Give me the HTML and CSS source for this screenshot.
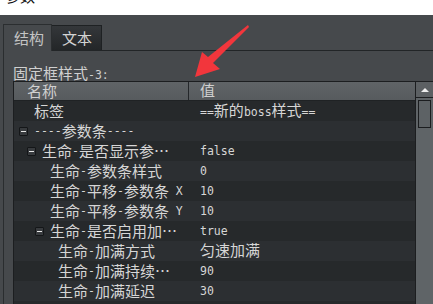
FILE: index.html
```html
<!DOCTYPE html>
<html lang="zh-CN">
<head>
    <meta charset="UTF-8">
    <title>属性</title>
    <link rel="stylesheet" href="styles.css">
</head>
<body>
    <div class="title"><span class="zh">参数</span></div>

    <div class="tabs">
        <div class="tab active"><span class="zh">结构</span></div>
        <div class="tab"><span class="zh">文本</span></div>
    </div>

    <div class="pane">
        <div class="caption"><span class="zh">固定框样式</span>-3:</div>
        <div class="view">
            <div class="list">
                <div class="head">
                    <div class="name"><span class="zh">名称</span></div>
                    <div class="value"><span class="zh">值</span></div>
                </div>
                <div class="row">
                    <div class="name l0"><i class="box leaf"></i><span class="zh">标签</span></div>
                    <div class="value">==<span class="zh">新的</span>boss<span class="zh">样式</span>==</div>
                </div>
                <div class="row">
                    <div class="name l0"><i class="box"></i>----<span class="zh">参数条</span>----</div>
                    <div class="value"></div>
                </div>
                <div class="row">
                    <div class="name l1"><i class="box"></i><span class="zh">生命</span>-<span class="zh">是否显示参…</span></div>
                    <div class="value">false</div>
                </div>
                <div class="row">
                    <div class="name l2"><i class="box leaf"></i><span class="zh">生命</span>-<span class="zh">参数条样式</span></div>
                    <div class="value">0</div>
                </div>
                <div class="row">
                    <div class="name l2"><i class="box leaf"></i><span class="zh">生命</span>-<span class="zh">平移</span>-<span class="zh">参数条</span>&nbsp;X</div>
                    <div class="value">10</div>
                </div>
                <div class="row">
                    <div class="name l2"><i class="box leaf"></i><span class="zh">生命</span>-<span class="zh">平移</span>-<span class="zh">参数条</span>&nbsp;Y</div>
                    <div class="value">10</div>
                </div>
                <div class="row">
                    <div class="name l2"><i class="box"></i><span class="zh">生命</span>-<span class="zh">是否启用加…</span></div>
                    <div class="value">true</div>
                </div>
                <div class="row">
                    <div class="name l3"><i class="box leaf"></i><span class="zh">生命</span>-<span class="zh">加满方式</span></div>
                    <div class="value"><span class="zh">匀速加满</span></div>
                </div>
                <div class="row">
                    <div class="name l3"><i class="box leaf"></i><span class="zh">生命</span>-<span class="zh">加满持续…</span></div>
                    <div class="value">90</div>
                </div>
                <div class="row">
                    <div class="name l3"><i class="box leaf"></i><span class="zh">生命</span>-<span class="zh">加满延迟</span></div>
                    <div class="value">30</div>
                </div>
            </div>
            <div class="scrollbar">
                <div class="up"><i class="tri"></i></div>
                <div class="thumb"></div>
            </div>
        </div>
    </div>

    <svg class="arrow" width="433" height="304" viewBox="0 0 433 304">
        <polygon points="248,25 208,57 202,52 195,77 220,69 213,63 249,27" fill="#f2363c"/>
    </svg>
</body>
</html>
```

FILE: styles.css
```css
body {
    margin: 0;
    height: 304px;
    overflow: hidden;
    position: relative;
    background-color: #46494c;
    color: #d6d6d6;
    font-family: "DejaVu Sans Mono", "Noto Sans CJK SC", monospace;
    font-size: 11.5px;
}
.zh {
    font-family: "Noto Sans CJK SC", sans-serif;
    font-size: 15px;
}
.title {
    height: 15px;
    overflow: hidden;
    background: #fff;
}
.title span {
    display: block;
    margin-top: -12px;
    padding-left: 5px;
    line-height: 15px;
    color: #111;
}
.tabs {
    display: flex;
    align-items: flex-end;
    height: 26px;
    padding: 9px 0 0 3px;
}
.tab {
    box-sizing: border-box;
    width: 50px;
    height: 25px;
    padding-left: 10px;
    line-height: 24px;
    border: 1px solid #1e2123;
    border-bottom: none;
    border-left: none;
    background: linear-gradient(#34373a, #232628);
    color: #d4d4d4;
}
.tab.active {
    position: relative;
    z-index: 1;
    width: 49px;
    height: 27px;
    margin-bottom: -1px;
    line-height: 26px;
    border-left: 1px solid #2b2e30;
    border-color: #2b2e30;
    background: #46494c;
    color: #c4c4c4;
}
.pane {
    margin-left: 3px;
    padding: 14px 0 0 9px;
    border-top: 1px solid #222527;
    border-left: 1px solid #2a2d2f;
    height: 300px;
}
.caption {
    height: 16px;
    line-height: 15px;
    color: #d0d0d0;
}
.view {
    display: flex;
    border: 1px solid #1c1e20;
    border-right: none;
    height: 240px;
}
.list {
    flex: 1;
    background: #26292b;
}
.head, .row {
    display: flex;
    align-items: center;
    box-sizing: border-box;
    height: 20px;
    line-height: 20px;
    white-space: nowrap;
}
.head {
    height: 19px;
    line-height: 18px;
    border-bottom: 1px solid #1f2224;
    background: linear-gradient(#606467, #575b5e);
    color: #d0d0d0;
}
.head .name {
    height: 18px;
    border-right: 1px solid #24272a;
    padding-left: 13px;
}
.row:nth-child(odd) {
    background: #2c2f32;
}
.name {
    display: flex;
    align-items: center;
    box-sizing: border-box;
    width: 175px;
    flex-shrink: 0;
}
.name.l0 { padding-left: 5px; }
.name.l1 { padding-left: 13px; }
.name.l2 { padding-left: 21px; }
.name.l3 { padding-left: 29px; }
.value {
    padding-left: 11px;
}
.box {
    position: relative;
    box-sizing: border-box;
    width: 9px;
    height: 9px;
    margin-right: 6px;
    flex-shrink: 0;
    border: 1px solid #141618;
    border-radius: 1px;
    background: #383b3e;
}
.box::after {
    content: "";
    position: absolute;
    left: 1px;
    top: 3px;
    width: 5px;
    height: 1px;
    background: #e8e8e8;
}
.box.leaf {
    visibility: hidden;
}
.scrollbar {
    width: 17px;
    flex-shrink: 0;
    border-left: 1px solid #1c1e20;
    background: #5f6467;
}
.up {
    display: flex;
    align-items: center;
    justify-content: center;
    height: 15px;
    border-bottom: 1px solid #1c1e20;
    background: #5c6063;
}
.tri {
    width: 0;
    height: 0;
    border-left: 4px solid transparent;
    border-right: 4px solid transparent;
    border-bottom: 4px solid #eeeeee;
}
.thumb {
    height: 26px;
    margin: 2px 2px 0 2px;
    border: 1px solid #1b1d1f;
    background: #5d6265;
}
.arrow {
    position: absolute;
    left: 0;
    top: 0;
    pointer-events: none;
}
```
